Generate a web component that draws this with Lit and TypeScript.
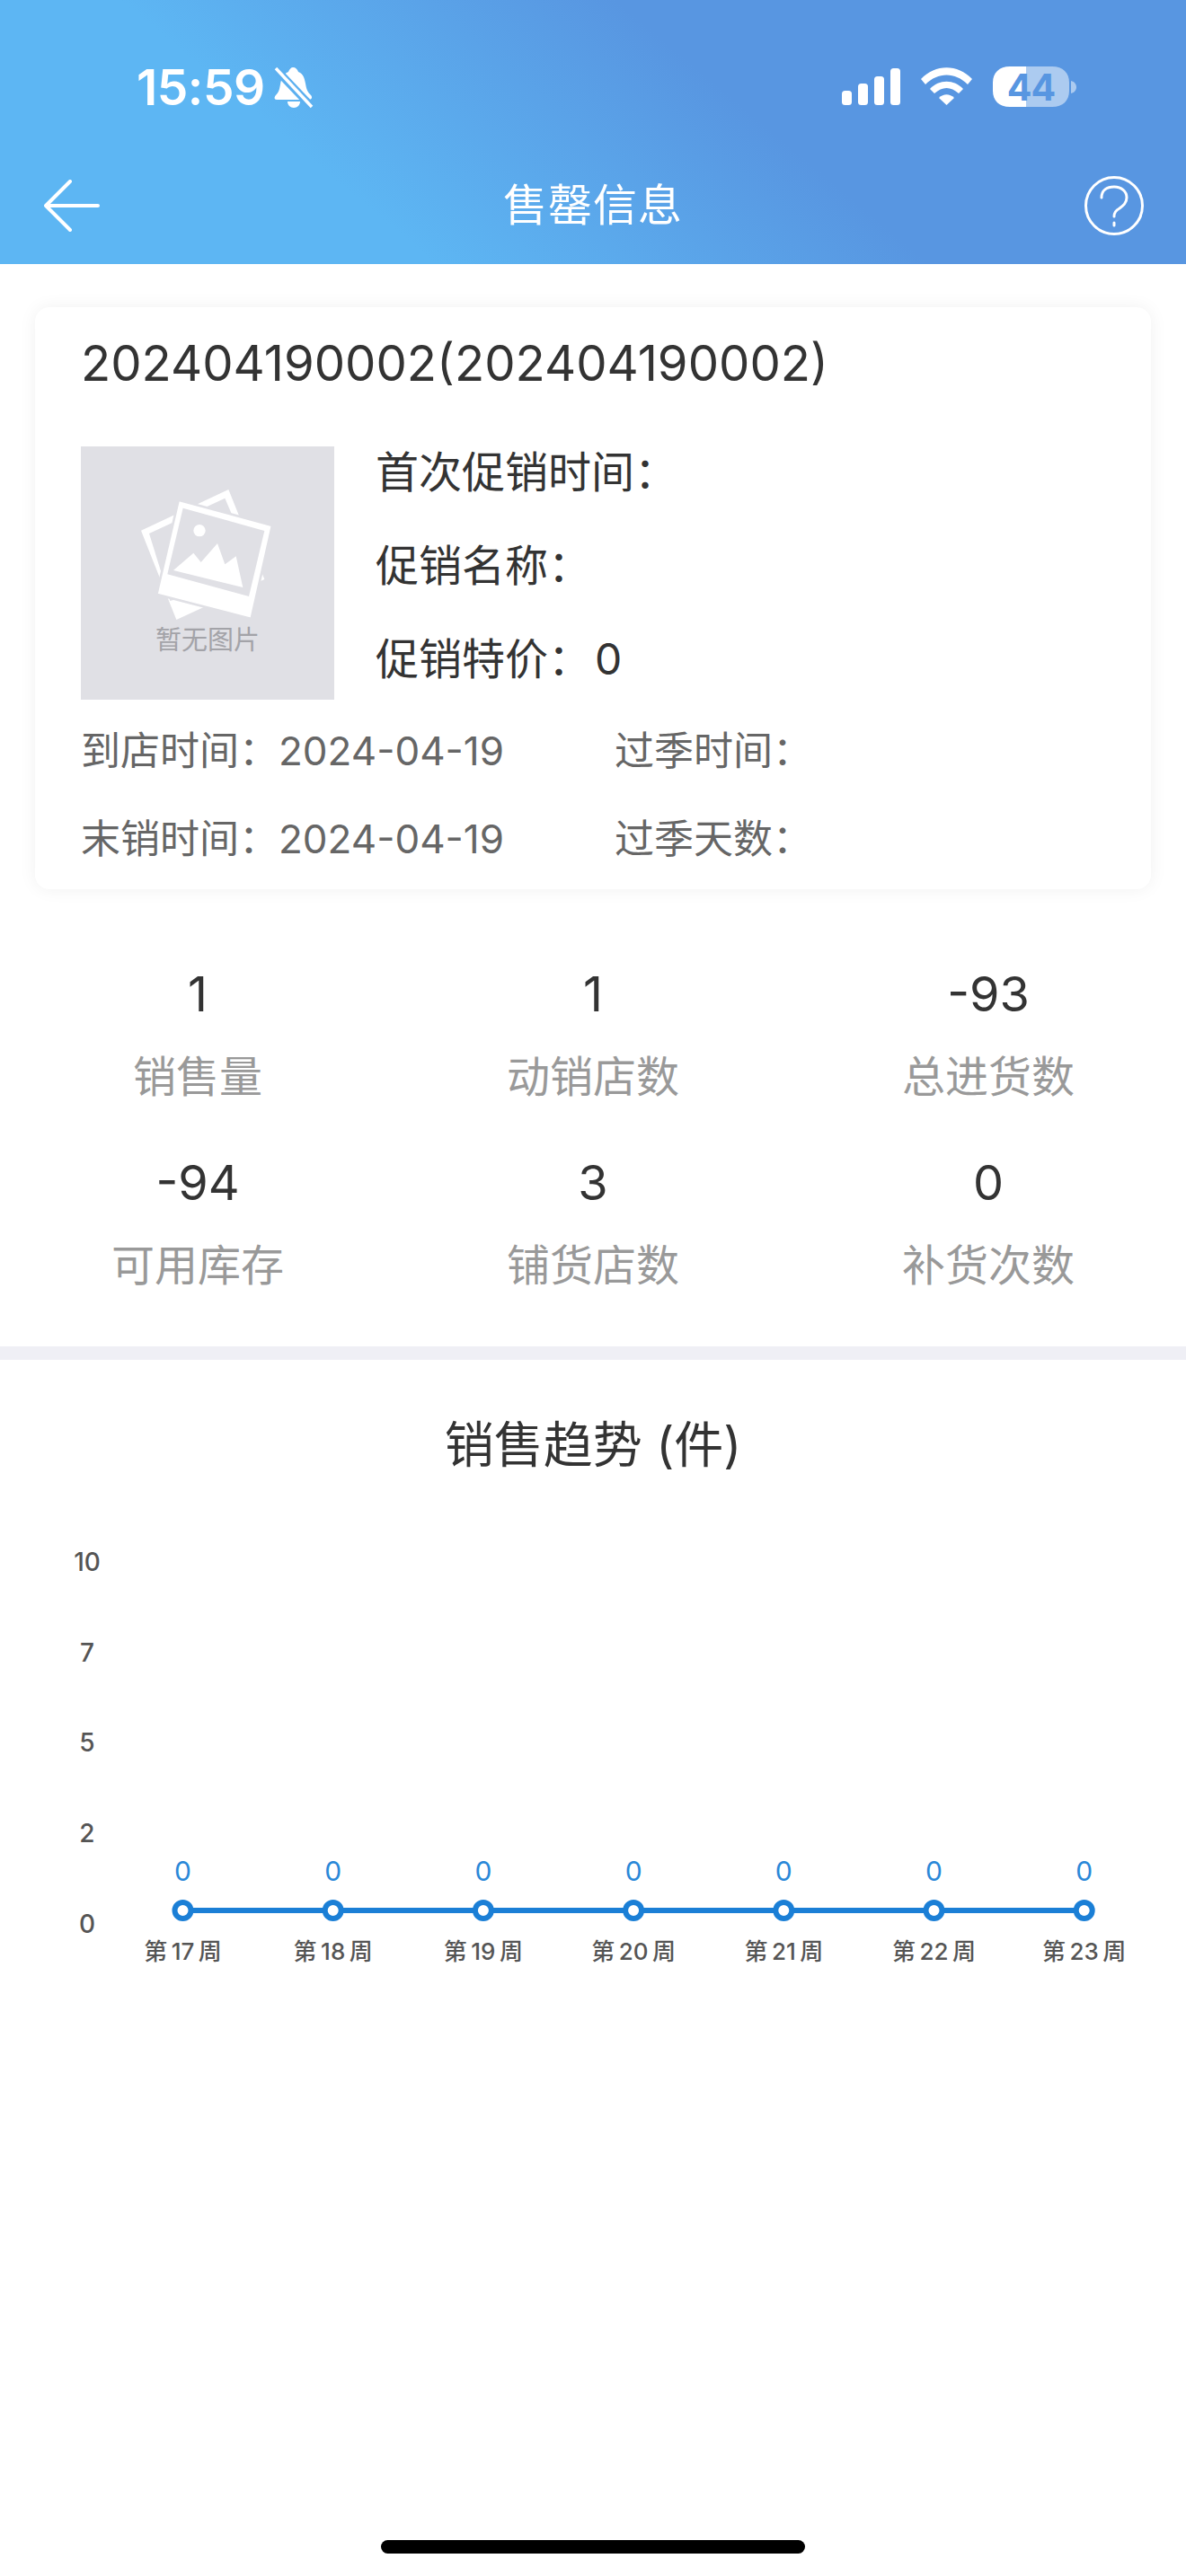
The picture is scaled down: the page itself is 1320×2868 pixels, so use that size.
import { LitElement, html, css, svg } from "lit";
import { customElement } from "lit/decorators.js";

const FONT = `Inter, "Noto Sans CJK SC", sans-serif`;

@customElement("app-root")
export class AppRoot extends LitElement {
  static styles = css`
    :host { display: block; width: 1320px; height: 2868px; background: #fff; font-family: Inter, "Noto Sans CJK SC", sans-serif; color: #333; position: relative; overflow: hidden; }
    .header { height: 294px; background: linear-gradient(40deg, #5db6f3 29%, #5896e1 62%); color: #fff; display: flex; flex-direction: column; }
    .status { height: 170px; display: flex; align-items: flex-start; padding: 74px 0 0 152px; box-sizing: border-box; position: relative; }
    .time { font-size: 55px; font-weight: 600; line-height: 46px; width: 153px; letter-spacing: -0.5px; white-space: nowrap; }
    .bell { margin-top: 1px; }
    .status-right { display: flex; align-items: flex-start; margin-left: 588px; margin-top: -6px; }
    .nav { flex: 1; display: flex; align-items: center; justify-content: space-between; padding: 0 49px; position: relative; margin-top: -6px; }
    .nav-title { position: absolute; left: 0; right: 0; text-align: center; font-size: 49px; line-height: 60px; letter-spacing: 1px; margin-bottom: 8px; font-family: "Noto Sans CJK SC", sans-serif; }
    .card { margin: 48px 39px 0; height: 648px; border-radius: 16px; background: #fff; box-shadow: 0 0 20px rgba(0,0,0,.06); padding: 29px 51px 0; box-sizing: border-box; }
    .code { font-size: 54.5px; line-height: 66px; color: #333; white-space: nowrap; }
    .product { display: flex; margin-top: 60px; }
    .thumb { width: 282px; height: 282px; background: #e0e0e5; display: flex; flex-direction: column; align-items: center; flex: none; }
    .thumb svg { margin-top: 23px; margin-left: 2px; }
    .thumb span { font-size: 29px; line-height: 36px; color: #a3a3a8; margin-top: -8px; font-family: "Noto Sans CJK SC", sans-serif; }
    .promo { margin-left: 46px; display: flex; flex-direction: column; gap: 44px; margin-top: -1px; }
    .promo div { font-size: 48px; line-height: 60px; color: #333; white-space: pre; }
    .promo em { font-style: normal; margin-left: 4px; }
    .dates { display: grid; grid-template-columns: 594px 1fr; row-gap: 38px; margin-top: 27px; font-size: 44px; line-height: 60px; color: #666; }
    .dates div { white-space: pre; }
    .stats { display: grid; grid-template-columns: repeat(3, 1fr); margin-top: 84px; row-gap: 55px; }
    .stat { display: flex; flex-direction: column; align-items: center; }
    .stat b { font-weight: 400; font-size: 54px; line-height: 66px; color: #333; }
    .stat span { font-size: 48px; line-height: 60px; margin-top: 29px; color: #999; }
    .band { height: 15px; background: #efeff5; margin-top: 60px; }
    .chart-title { text-align: center; font-size: 55px; line-height: 70px; margin-top: 59px; color: #333; }
    .chart { display: block; margin-top: 57px; }
    .home { position: absolute; left: 424px; top: 2828px; width: 472px; height: 15px; border-radius: 8px; background: #000; }
  `;

  private chart() {
    const xs = [0, 1, 2, 3, 4, 5, 6].map((i) => 203.5 + i * 167.2);
    const weeks = [17, 18, 19, 20, 21, 22, 23];
    const ys: [string, number][] = [["10", 1739], ["7", 1840], ["5", 1940], ["2", 2041], ["0", 2142]];
    const top = 1700;
    const lineY = 2127 - top;
    return svg`
      ${ys.map(([t, y]) => svg`<text x="97" y=${y - top + 10} text-anchor="middle" font-size="28" font-weight="500" fill="#555" font-family=${FONT}>${t}</text>`)}
      <line x1=${xs[0]} x2=${xs[6]} y1=${lineY} y2=${lineY} stroke="#1b7fd6" stroke-width="6"></line>
      ${xs.map((x, i) => svg`
        <circle cx=${x} cy=${lineY} r="9" fill="#fff" stroke="#1b7fd6" stroke-width="6"></circle>
        <text x=${x} y=${2083 - top + 11} text-anchor="middle" font-size="30" fill="#2a88d8" font-family=${FONT}>0</text>
        <text x=${x} y=${2173 - top + 9} text-anchor="middle" font-size="26" font-weight="500" fill="#555" font-family=${FONT}>第\u2009${weeks[i]}\u2009周</text>
      `)}
    `;
  }

  render() {
    return html`
      <div class="header">
        <div class="status">
          <div class="time">15:59</div>
          <svg class="bell" width="44" height="46" viewBox="0 0 44 46" fill="#fff">
            <path d="M21 0c3 0 5 2 6 5 6 2 7 8 8 13 1 6 2 9 6 13 2 2 1 5-2 5H3c-3 0-3-3-1-5 3-3 4-6 5-12 1-6 3-12 9-14 1-3 3-5 5-5z"></path>
            <path d="M15 38h14c0 4-3 7-7 7s-7-3-7-7z"></path>
            <path d="M1 1L41 43" stroke="#5cb0f0" stroke-width="9"></path>
            <path d="M2 1L42 44" stroke="#fff" stroke-width="3.5"></path>
          </svg>
          <div class="status-right">
            <svg width="261" height="56" viewBox="0 -6 261 56" fill="#fff">
              <rect x="0" y="27" width="11" height="16" rx="3.5"></rect>
              <rect x="18" y="19" width="11" height="24" rx="3.5"></rect>
              <rect x="36" y="11" width="11" height="32" rx="3.5"></rect>
              <rect x="54" y="2" width="11" height="41" rx="3.5"></rect>
              <g transform="translate(88,1)">
                <path d="M0 13 C16 -4 41 -4 57 13 L52 19 C38 5 19 5 5 19 Z"></path>
                <path d="M10 24 C20 13 37 13 47 24 L42 29 C33 21 24 21 15 29 Z"></path>
                <path d="M20 34 C25 29 32 29 37 34 L28.5 42 Z"></path>
              </g>
              <path d="M187 0 H205 V45 H187 C175 45 168 38 168 27 V18 C168 7 175 0 187 0 Z"></path>
              <path d="M205 0 H234 C246 0 253 7 253 18 V27 C253 38 246 45 234 45 H205 Z" opacity="0.5"></path>
              <path d="M255 16 C259 17 261 20 261 23 C261 26 259 29 255 30 Z" opacity="0.5"></path>
              <text x="210.5" y="38" text-anchor="middle" font-size="41" font-weight="700" fill="#5896e1" font-family=${FONT} letter-spacing="-1">44</text>
            </svg>
          </div>
        </div>
        <div class="nav">
          <svg width="62" height="58" viewBox="0 0 62 58" fill="none" stroke="#fff" stroke-width="4" stroke-linecap="round" stroke-linejoin="round">
            <path d="M29 2L2 29L29 56M2 29H60"></path>
          </svg>
          <div class="nav-title">售罄信息</div>
          <svg width="66" height="66" viewBox="0 0 66 66" fill="none" stroke="#fff" stroke-width="3" stroke-linecap="round" style="margin-right:-2px">
            <circle cx="33" cy="33" r="31.5"></circle>
            <path d="M19 24c0-8 6-12 14-12 8 0 14 5 14 12 0 6-4 9-8 12-4 2-6 4-6 9"></path>
            <path d="M33 52v3"></path>
          </svg>
        </div>
      </div>

      <div class="card">
        <div class="code">202404190002(202404190002)</div>
        <div class="product">
          <div class="thumb">
            <svg width="200" height="180" viewBox="0 0 600 540">
              <path fill="#fff" d="M75 212L367 75L487 375L193 510Z"></path>
              <path fill="#e0e0e5" d="M102 222L355 104L466 365L172 447Z"></path>
              <path fill="#fff" stroke="#e0e0e5" stroke-width="8" d="M200 110L513 195L443 507L127 425Z"></path>
              <path fill="#e0e0e5" d="M215 137L487 213L435 432L163 358Z"></path>
              <circle cx="270" cy="212" r="20" fill="#fff"></circle>
              <path fill="#fff" d="M183 345L250 287L275 318L330 255L355 325L392 298L415 402Z"></path>
            </svg>
            <span>暂无图片</span>
          </div>
          <div class="promo">
            <div>首次促销时间：</div>
            <div>促销名称：</div>
            <div>促销特价：<em>0</em></div>
          </div>
        </div>
        <div class="dates">
          <div>到店时间：2024-04-19</div>
          <div>过季时间：</div>
          <div>末销时间：2024-04-19</div>
          <div>过季天数：</div>
        </div>
      </div>

      <div class="stats">
        ${[["1","销售量"],["1","动销店数"],["-93","总进货数"],["-94","可用库存"],["3","铺货店数"],["0","补货次数"]].map(
          ([v, l]) => html`<div class="stat"><b>${v}</b><span>${l}</span></div>`
        )}
      </div>
      <div class="band"></div>
      <div class="chart-title">销售趋势 (件)</div>
      <svg class="chart" width="1320" height="520" viewBox="0 0 1320 520">${this.chart()}</svg>
      <div class="home"></div>
    `;
  }
}
